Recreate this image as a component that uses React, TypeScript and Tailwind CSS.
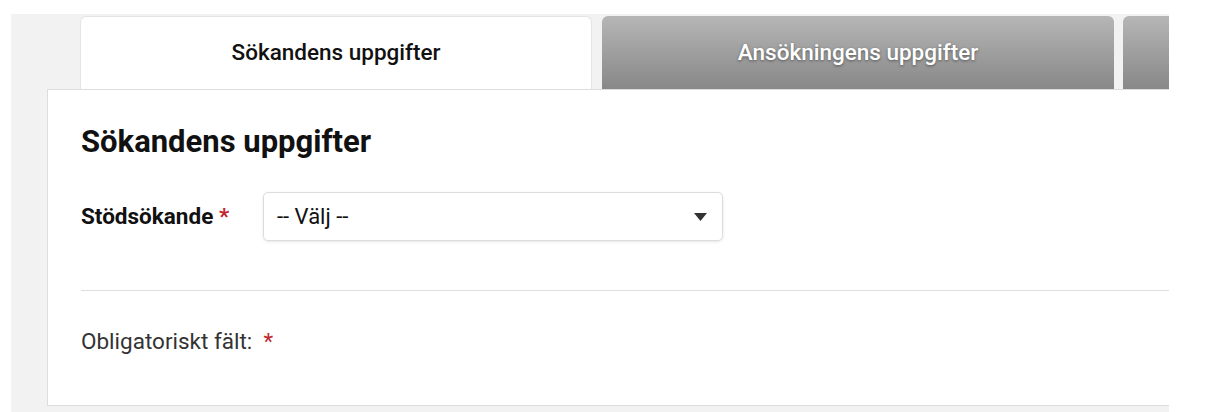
export default function App() {
  return (
    <main className="min-h-screen bg-white pt-[14px] pl-[11px] font-['Roboto',sans-serif]">
      {/* Frame */}
      <div className="w-[1158px] h-[398px] overflow-hidden bg-[#f2f2f2] pt-[2px]">
        {/* Tabs */}
        <div className="flex pl-[69px] h-[73px]">
          <div className="w-[512px] shrink-0 bg-white border border-b-0 border-[#e4e4e4] rounded-t-[6px] flex items-center justify-center text-[22.5px] font-medium text-[#111]">
            Sökandens uppgifter
          </div>
          <div className="ml-[10px] w-[512px] shrink-0 rounded-t-[6px] bg-gradient-to-b from-[#b6b6b6] to-[#888888] flex items-center justify-center text-[22.5px] font-medium text-white [text-shadow:0_1px_3px_rgba(0,0,0,0.45)]">
            Ansökningens uppgifter
          </div>
          <div className="ml-[9px] w-[512px] shrink-0 rounded-t-[6px] bg-gradient-to-b from-[#b6b6b6] to-[#888888]" />
        </div>

        {/* Panel */}
        <section className="ml-[36px] w-[1200px] h-[317px] bg-white border border-[#dddddd] pl-[33px] pt-[33px]">
          <h2 className="text-[31px] leading-[38px] font-bold text-[#111]">
            Sökandens uppgifter
          </h2>

          <div className="mt-[31px] flex items-center">
            <label className="w-[182px] shrink-0 text-[22.5px] font-bold text-[#111]">
              Stödsökande <span className="text-[#c0272d]">*</span>
            </label>
            <div className="w-[460px] h-[49px] rounded-[5px] border border-[#dcdcdc] shadow-[0_1px_3px_rgba(0,0,0,0.1)] flex items-center justify-between pl-[13px] pr-[15px] text-[22px] text-[#111]">
              <span>-- Välj --</span>
              <svg width="13" height="8" viewBox="0 0 13 8">
                <path d="M0 0 H13 L6.5 8 Z" fill="#333" />
              </svg>
            </div>
          </div>

          <div className="mt-[49px] border-t border-[#dddddd]" />

          <p className="mt-[37px] text-[22.5px] leading-[26px] text-[#333]">
            Obligatoriskt fält:&nbsp; <span className="text-[#c0272d]">*</span>
          </p>
        </section>
      </div>
    </main>
  );
}
